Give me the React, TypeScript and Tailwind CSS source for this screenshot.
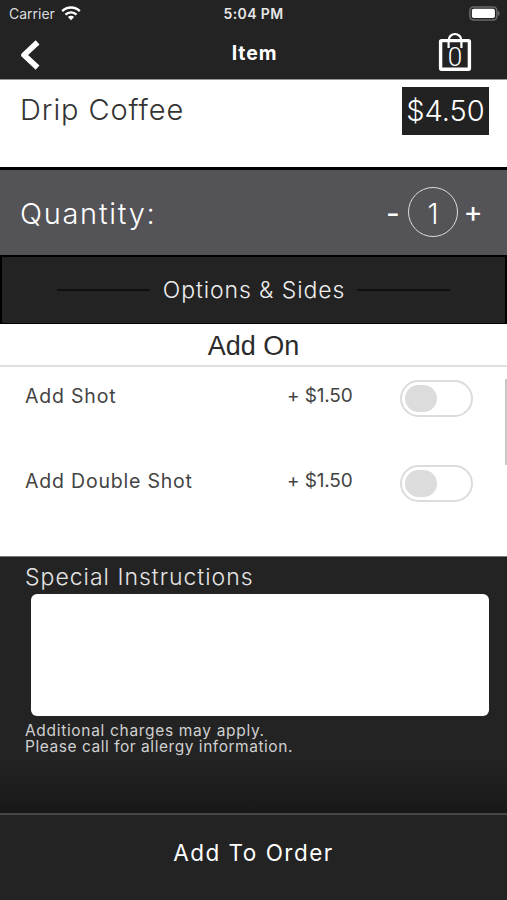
import { useState } from "react";

const addOns = [
  { name: "Add Shot", price: "$1.50" },
  { name: "Add Double Shot", price: "$1.50" },
];

function StatusBar() {
  return (
    <div className="grid h-7 grid-cols-3 items-center px-[7px] text-white">
      <div className="flex items-center gap-1.5 pb-0.5 pl-0.5 text-[14px] text-[#dcdcdc]">
        <span>Carrier</span>
        <svg viewBox="0 0 20 15" className="h-[15px] w-5" fill="none" stroke="white" strokeWidth="2.4">
          <path d="M1.2 5.1a12.4 12.4 0 0 1 17.6 0" />
          <path d="M4.5 8.6a7.8 7.8 0 0 1 11 0" />
          <path d="M10 14.2 6.9 11.1a4.4 4.4 0 0 1 6.2 0z" fill="white" stroke="none" />
        </svg>
      </div>
      <p className="pb-0.5 text-center text-[14px] font-semibold tracking-[0.4px] text-[#e6e6e6]">5:04 PM</p>
      <svg viewBox="0 0 31 15" className="mb-0.5 h-[15px] w-[31px] justify-self-end">
        <rect x="0.9" y="0.9" width="27" height="13" rx="3.6" fill="none" stroke="#6a6a6a" strokeWidth="1.5" />
        <rect x="2.9" y="2.7" width="23" height="9.4" rx="1.8" fill="white" />
        <path d="M29 5v5c1-.4 1.6-1.3 1.6-2.5S30 5.4 29 5z" fill="#6a6a6a" />
      </svg>
    </div>
  );
}

function NavBar() {
  return (
    <div className="flex h-[51px] items-center justify-between pr-9 pl-5 text-white">
      <button type="button" aria-label="Back" className="w-9">
        <svg viewBox="0 0 20 30" className="mt-0.5 h-[30px] w-5" fill="none" stroke="white" strokeWidth="5.6" strokeLinejoin="round">
          <path d="M17.6 2.4 4 15l13.6 12.6" />
        </svg>
      </button>
      <h1 className="pl-4 text-[19.5px] font-bold tracking-[0.9px]">Item</h1>
      <svg viewBox="0 0 36 40" className="-mt-1.5 -mr-0.5 h-10 w-9" fill="none" stroke="white">
        <rect x="3.6" y="9.6" width="28.8" height="28.6" rx="1" strokeWidth="3.4" />
        <path d="M11.6 17V9.4a6.4 6.4 0 0 1 12.8 0V17" strokeWidth="2.2" />
        <text x="18" y="34.5" textAnchor="middle" fill="white" stroke="none" className="font-['Roboto',sans-serif] text-[26px] font-light">
          0
        </text>
      </svg>
    </div>
  );
}

function Toggle({ label }: { label: string }) {
  const [on, setOn] = useState(false);
  return (
    <button
      type="button"
      role="switch"
      aria-label={label}
      aria-checked={on}
      onClick={() => setOn(!on)}
      className={`flex h-[37px] w-[73px] items-center rounded-full border-2 border-[#dcdcdc] px-[3px] ${on ? "justify-end" : "justify-start"}`}
    >
      <span className="h-[27px] w-8 rounded-full bg-[#dcdcdc]" />
    </button>
  );
}

export default function App() {
  const [quantity, setQuantity] = useState(1);

  return (
    <main className="flex h-[900px] w-full flex-col overflow-hidden bg-[#232323] font-['Inter',sans-serif]">
      <header className="h-[79px] shrink-0">
        <StatusBar />
        <NavBar />
      </header>

      <section className="flex h-[88px] shrink-0 items-start justify-between border-t border-[#999] bg-white pr-[18px] pl-5">
        <h2 className="mt-3 text-[29px] leading-9 font-light tracking-[0.9px] text-[#333]">Drip Coffee</h2>
        <p className="mt-[7px] flex h-12 w-[87px] items-center justify-center bg-[#222] text-[29px] font-light text-white">
          $4.50
        </p>
      </section>

      <section className="flex h-[90px] shrink-0 items-center justify-between border-t-3 border-b-2 border-black bg-[#545357] pr-[23px] pl-5 text-white">
        <h2 className="pt-[3px] text-[29px] font-light tracking-[1.7px]">Quantity:</h2>
        <div className="mb-0.5 flex items-center gap-1">
          <button type="button" className="w-[18px] pt-0.5 text-left text-[30px] leading-8" onClick={() => setQuantity(Math.max(1, quantity - 1))}>
            -
          </button>
          <span className="flex size-[50px] items-center justify-center rounded-full border-[1.5px] border-[#ddd] pt-1 text-[28px] font-light">
            {quantity}
          </span>
          <button type="button" className="w-[22px] text-[29px] leading-8" onClick={() => setQuantity(quantity + 1)}>
            +
          </button>
        </div>
      </section>

      <section className="flex h-[67px] shrink-0 items-center justify-center gap-[13px] border-x-2 border-b border-black">
        <span className="h-0.5 w-[93px] bg-[#101010]" />
        <h2 className="-mr-px text-[23px] font-light tracking-[0.9px] text-[#eee]">Options &amp; Sides</h2>
        <span className="h-0.5 w-[93px] bg-[#101010]" />
      </section>

      <section className="h-[232px] shrink-0 bg-white text-[#444]">
        <h3 className="h-[43px] border-b-2 border-[#e0e0e0] pt-px text-center font-['Liberation_Sans',sans-serif] text-[27px] leading-[43px] text-[#2b2b2b]">
          Add On
        </h3>
        <div className="flex">
          <ul className="flex-1">
            {addOns.map(({ name, price }) => (
              <li key={name} className="flex h-[85px] items-start pt-[13px] pl-[25px]">
                <p className="w-[262px] pt-1 text-[19.5px] leading-6 tracking-[0.8px]">{name}</p>
                <p className="w-[113px] pt-1 text-[19px] leading-6 tracking-[-0.15px]">+ {price}</p>
                <Toggle label={name} />
              </li>
            ))}
          </ul>
          <span className="mt-3 h-[86px] w-0.5 bg-[#c8c8c8]" />
        </div>
      </section>

      <section className="h-[257px] shrink-0 border-t border-[#777] bg-linear-to-b from-[#232323] from-80% to-[#181818] pt-1.5 pr-[18px] pl-[25px] text-[#e4e4e4]">
        <h3 className="text-[23px] leading-7 font-light tracking-[1px]">Special Instructions</h3>
        <textarea
          aria-label="Special Instructions"
          className="mt-[3px] ml-1.5 block h-[122px] w-[458px] resize-none rounded-md bg-white p-2 text-black outline-none"
        />
        <div className="mt-[7px] text-[15.5px] leading-4 text-[#d0d0d0]">
          <p className="tracking-[0.68px]">Additional charges may apply.</p>
          <p className="tracking-[0.54px]">Please call for allergy information.</p>
        </div>
      </section>

      <button type="button" className="flex-1 border-t-2 border-[#454545] pb-2.5 text-[22.5px] tracking-[1.5px] text-white">
        Add To Order
      </button>
    </main>
  );
}
